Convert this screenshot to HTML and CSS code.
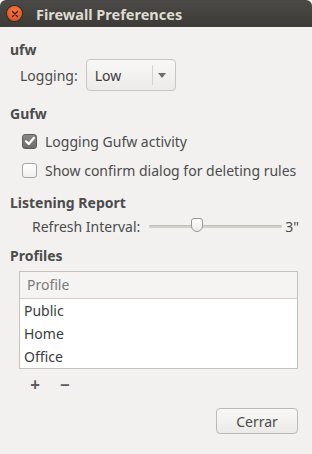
FILE: index.html
```html
<!DOCTYPE html>
<html lang="es">
<head>
  <meta charset="UTF-8">
  <title>Firewall Preferences</title>
  <link rel="stylesheet" href="styles.css">
</head>
<body>
  <div class="window">
    <div class="titlebar">
      <span class="close">
        <svg width="8" height="8" viewBox="0 0 8 8"><path d="M1.5 1.5 L6.5 6.5 M6.5 1.5 L1.5 6.5" stroke="#3a1a10" stroke-width="1.3" stroke-linecap="round"/></svg>
      </span>
      <span class="title">Firewall Preferences</span>
    </div>

    <div class="content">
      <div class="heading h-ufw">ufw</div>
      <div class="logging-row">
        <span class="label">Logging:</span>
        <div class="combo">
          <span class="combo-value">Low</span>
          <span class="combo-sep"></span>
          <span class="combo-arrow"></span>
        </div>
      </div>

      <div class="heading h-gufw">Gufw</div>
      <label class="check-row first">
        <span class="checkbox checked">
          <svg width="12" height="12" viewBox="0 0 12 12"><path d="M2 6.3 L4.8 9 L10 2.8" fill="none" stroke="#fff" stroke-width="2.2" stroke-linecap="round" stroke-linejoin="round"/></svg>
        </span>
        <span class="label">Logging Gufw activity</span>
      </label>
      <label class="check-row second">
        <span class="checkbox"></span>
        <span class="label">Show confirm dialog for deleting rules</span>
      </label>

      <div class="heading h-report">Listening Report</div>
      <div class="refresh-row">
        <span class="label">Refresh Interval:</span>
        <div class="slider">
          <div class="track"></div>
          <div class="handle"></div>
        </div>
        <span class="slider-value">3"</span>
      </div>

      <div class="heading h-profiles">Profiles</div>
      <div class="tree">
        <div class="tree-header">Profile</div>
        <div class="tree-row">Public</div>
        <div class="tree-row">Home</div>
        <div class="tree-row">Office</div>
      </div>

      <div class="tree-actions">
        <span class="action">+</span>
        <span class="action">&minus;</span>
      </div>

      <div class="buttons">
        <button class="btn">Cerrar</button>
      </div>
    </div>
  </div>
</body>
</html>
```

FILE: styles.css
```css
body {
  margin: 0;
  background-color: #f2f1f0;
  font-family: "Noto Sans", "DejaVu Sans", sans-serif;
  font-size: 14px;
  color: #3c3c3c;
}

.window {
  width: 312px;
  height: 454px;
  background-color: #f2f1f0;
  overflow: hidden;
}

.titlebar {
  height: 27px;
  display: flex;
  align-items: center;
  background: linear-gradient(#4b4a46, #3c3b37);
  border-radius: 6px 6px 0 0;
}

.close {
  width: 15px;
  height: 15px;
  margin-left: 7px;
  border-radius: 50%;
  background: radial-gradient(circle at 50% 35%, #f6773f, #df4a16);
  box-shadow: 0 0 0 1px #2f2e2a;
  display: flex;
  align-items: center;
  justify-content: center;
}

.title {
  margin-left: 14px;
  font-weight: bold;
  font-size: 14.5px;
  color: #dfdbd2;
}

.content {
  display: flex;
  flex-direction: column;
}

.heading {
  height: 18px;
  line-height: 18px;
  padding-left: 10px;
  font-weight: bold;
  color: #4c4c4c;
}

.label {
  color: #4c4c4c;
}

.h-ufw { margin-top: 14px; }
.h-gufw { margin-top: 14px; }
.h-report { margin-top: 14px; }
.h-profiles { margin-top: 11px; }

.logging-row {
  height: 32px;
  display: flex;
  align-items: center;
  padding-left: 20px;
}

.combo {
  margin-left: 8px;
  width: 88px;
  height: 30px;
  border: 1px solid #c9c6c1;
  border-radius: 4px;
  background: linear-gradient(#f8f8f7, #ecebe9);
  display: flex;
  align-items: center;
}

.combo-value {
  margin-left: 8px;
  width: 57px;
  color: #3c3c3c;
}

.combo-sep {
  width: 1px;
  height: 20px;
  background-color: #d6d3cf;
}

.combo-arrow {
  margin-left: 5px;
  width: 0;
  height: 0;
  border-left: 4px solid transparent;
  border-right: 4px solid transparent;
  border-top: 5px solid #6d6d6d;
}

.check-row {
  height: 20px;
  display: flex;
  align-items: center;
  padding-left: 22px;
}

.check-row.first { margin-top: 8px; }
.check-row.second { margin-top: 9px; }

.checkbox {
  width: 13px;
  height: 13px;
  border: 1px solid #a9a6a1;
  border-radius: 3px;
  background: linear-gradient(#ffffff, #f0efee);
  margin-right: 8px;
  display: flex;
  align-items: center;
  justify-content: center;
}

.checkbox.checked {
  border-color: #5c5b57;
  background: linear-gradient(#8a8884, #6f6d69);
}

.refresh-row {
  margin-top: 4px;
  height: 20px;
  display: flex;
  align-items: center;
  padding-left: 32px;
}

.slider {
  position: relative;
  margin-left: 9px;
  width: 133px;
  height: 20px;
  display: flex;
  align-items: center;
}

.track {
  width: 100%;
  height: 3px;
  border-radius: 2px;
  background-color: #d3d0cc;
  box-shadow: inset 0 1px 0 #c4c1bc;
}

.handle {
  position: absolute;
  left: 42px;
  top: 2px;
  width: 10px;
  height: 12px;
  border: 1px solid #9b9893;
  border-radius: 3px 3px 6px 6px;
  background: linear-gradient(#ffffff, #ebeae8);
}

.slider-value {
  margin-left: 3px;
  color: #4c4c4c;
}

.tree {
  margin: 6px 14px 0 19px;
  height: 96px;
  border: 1px solid #c6c3bf;
  background-color: #ffffff;
}

.tree-header {
  height: 26px;
  line-height: 26px;
  padding-left: 7px;
  background-color: #f5f4f3;
  border-bottom: 1px solid #d2cfcb;
  color: #7b7b7b;
}

.tree-row {
  height: 23px;
  line-height: 23px;
  padding-left: 4px;
  color: #3c3c3c;
}

.tree-actions {
  margin-top: 5px;
  height: 20px;
  display: flex;
  align-items: center;
  padding-left: 29px;
  gap: 18px;
}

.action {
  font-size: 17px;
  font-weight: bold;
  color: #5e5e5e;
  width: 12px;
  text-align: center;
}

.buttons {
  margin-top: 14px;
  display: flex;
  justify-content: flex-end;
  padding-right: 14px;
}

.btn {
  width: 82px;
  height: 26px;
  border: 1px solid #bdbab5;
  border-radius: 4px;
  background: linear-gradient(#f8f8f7, #ebeae8);
  font-family: inherit;
  font-size: 14px;
  color: #4c4c4c;
  padding: 0;
}
```
